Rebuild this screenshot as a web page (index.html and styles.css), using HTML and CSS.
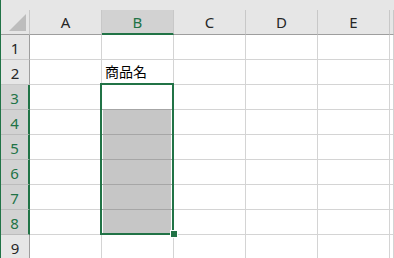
FILE: index.html
```html
<!DOCTYPE html>
<html lang="ja">
<head>
    <meta charset="UTF-8">
    <title>商品名</title>
    <link rel="stylesheet" href="styles.css">
</head>
<body>

<div class="sheet">
    <div class="band"></div>
    <div class="grid">
        <!-- column headers -->
        <div class="corner">
            <svg width="29" height="24" viewBox="0 0 29 24"><polygon points="25,4 25,21 8,21" fill="#bdbdbd"/></svg>
        </div>
        <div class="colhead">A</div>
        <div class="colhead active">B</div>
        <div class="colhead">C</div>
        <div class="colhead">D</div>
        <div class="colhead">E</div>
        <div class="colhead"></div>

        <div class="rowhead">1</div>
        <div class="cell"></div><div class="cell"></div><div class="cell"></div><div class="cell"></div><div class="cell"></div><div class="cell"></div>

        <div class="rowhead">2</div>
        <div class="cell"></div><div class="cell text">商品名</div><div class="cell"></div><div class="cell"></div><div class="cell"></div><div class="cell"></div>

        <div class="rowhead active">3</div>
        <div class="cell"></div><div class="cell top"></div><div class="cell"></div><div class="cell"></div><div class="cell"></div><div class="cell"></div>

        <div class="rowhead active">4</div>
        <div class="cell"></div><div class="cell picked"></div><div class="cell"></div><div class="cell"></div><div class="cell"></div><div class="cell"></div>

        <div class="rowhead active">5</div>
        <div class="cell"></div><div class="cell picked"></div><div class="cell"></div><div class="cell"></div><div class="cell"></div><div class="cell"></div>

        <div class="rowhead active">6</div>
        <div class="cell"></div><div class="cell picked"></div><div class="cell"></div><div class="cell"></div><div class="cell"></div><div class="cell"></div>

        <div class="rowhead active">7</div>
        <div class="cell"></div><div class="cell picked"></div><div class="cell"></div><div class="cell"></div><div class="cell"></div><div class="cell"></div>

        <div class="rowhead active">8</div>
        <div class="cell"></div><div class="cell picked"></div><div class="cell"></div><div class="cell"></div><div class="cell"></div><div class="cell"></div>

        <div class="rowhead">9</div>
        <div class="cell"></div><div class="cell"></div><div class="cell"></div><div class="cell"></div><div class="cell"></div><div class="cell"></div>
    </div>

    <div class="selection"></div>
    <div class="handle"></div>
</div>

</body>
</html>
```

FILE: styles.css
```css
* {
    box-sizing: border-box;
}
body {
    margin: 0;
    overflow: hidden;
    background-color: #ffffff;
    font-family: "Noto Sans", "Noto Sans CJK JP", sans-serif;
}
.sheet {
    position: relative;
    height: 258px;
    border-left: 1px solid #217346;
}
.band {
    height: 10px;
    background-color: #e6e6e6;
}
.grid {
    display: grid;
    grid-template-columns: 29px repeat(5, 72px) 1fr;
    grid-auto-rows: 25px;
}
.corner {
    background-color: #e6e6e6;
    border-right: 1px solid #c8c8c8;
    border-bottom: 1px solid #9e9e9e;
}
.corner svg {
    display: block;
}
.colhead {
    display: flex;
    align-items: center;
    justify-content: center;
    background-color: #e6e6e6;
    border-right: 1px solid #c8c8c8;
    border-bottom: 1px solid #9e9e9e;
    color: #262626;
    font-size: 15px;
}
.colhead.active {
    background-color: #d2d2d2;
    border-bottom: 2px solid #217346;
    color: #217346;
}
.rowhead {
    display: flex;
    align-items: center;
    justify-content: center;
    padding-top: 1px;
    background-color: #e6e6e6;
    border-right: 1px solid #9e9e9e;
    border-bottom: 1px solid #c8c8c8;
    color: #262626;
    font-size: 15px;
}
.rowhead.active {
    background-color: #d2d2d2;
    border-right: 2px solid #217346;
    border-bottom-color: #bcbcbc;
    color: #217346;
}
.cell {
    border-right: 1px solid #d4d4d4;
    border-bottom: 1px solid #d4d4d4;
}
.cell.text {
    display: flex;
    align-items: flex-end;
    padding: 0 0 3px 3px;
    font-family: "Noto Sans CJK JP", sans-serif;
    font-size: 14px;
    color: #000000;
}
.cell.top {
    border-bottom-color: #a6a6a6;
}
.cell.picked {
    background-color: #c6c6c6;
    border-bottom-color: #a6a6a6;
    box-shadow: inset 1px 0 0 #ffffff, inset -2px 0 0 #ffffff;
}
.selection {
    position: absolute;
    left: 99px;
    top: 83px;
    width: 74px;
    height: 152px;
    border: 2px solid #217346;
}
.handle {
    position: absolute;
    left: 169px;
    top: 230px;
    width: 8px;
    height: 8px;
    background-color: #217346;
    border: 1px solid #ffffff;
}
```
